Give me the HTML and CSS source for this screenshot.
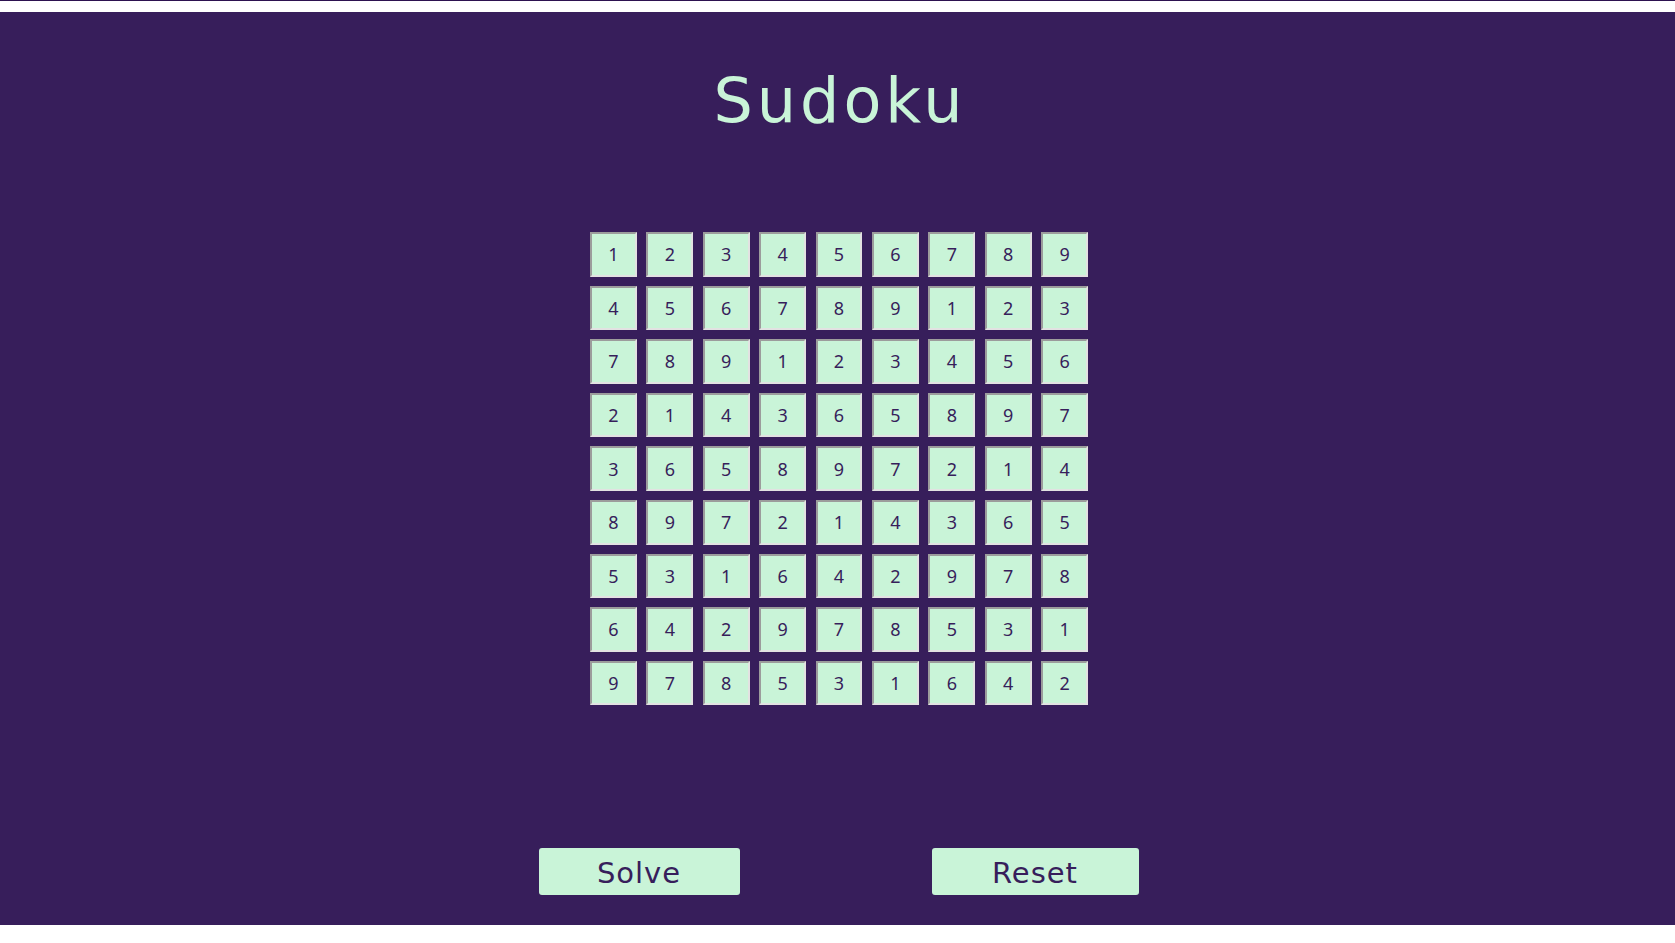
FILE: index.html
```html
<!DOCTYPE html>
<html lang="en">
<head>
<meta charset="utf-8">
<title>Sudoku</title>
<link rel="stylesheet" href="styles.css">
</head>
<body>
<div class="topline"></div>
<main class="app">
  <h1 class="title">Sudoku</h1>
  <div class="board-wrap">
    <div class="board">
      <div class="cell">1</div><div class="cell">2</div><div class="cell">3</div><div class="cell">4</div><div class="cell">5</div><div class="cell">6</div><div class="cell">7</div><div class="cell">8</div><div class="cell">9</div>
      <div class="cell">4</div><div class="cell">5</div><div class="cell">6</div><div class="cell">7</div><div class="cell">8</div><div class="cell">9</div><div class="cell">1</div><div class="cell">2</div><div class="cell">3</div>
      <div class="cell">7</div><div class="cell">8</div><div class="cell">9</div><div class="cell">1</div><div class="cell">2</div><div class="cell">3</div><div class="cell">4</div><div class="cell">5</div><div class="cell">6</div>
      <div class="cell">2</div><div class="cell">1</div><div class="cell">4</div><div class="cell">3</div><div class="cell">6</div><div class="cell">5</div><div class="cell">8</div><div class="cell">9</div><div class="cell">7</div>
      <div class="cell">3</div><div class="cell">6</div><div class="cell">5</div><div class="cell">8</div><div class="cell">9</div><div class="cell">7</div><div class="cell">2</div><div class="cell">1</div><div class="cell">4</div>
      <div class="cell">8</div><div class="cell">9</div><div class="cell">7</div><div class="cell">2</div><div class="cell">1</div><div class="cell">4</div><div class="cell">3</div><div class="cell">6</div><div class="cell">5</div>
      <div class="cell">5</div><div class="cell">3</div><div class="cell">1</div><div class="cell">6</div><div class="cell">4</div><div class="cell">2</div><div class="cell">9</div><div class="cell">7</div><div class="cell">8</div>
      <div class="cell">6</div><div class="cell">4</div><div class="cell">2</div><div class="cell">9</div><div class="cell">7</div><div class="cell">8</div><div class="cell">5</div><div class="cell">3</div><div class="cell">1</div>
      <div class="cell">9</div><div class="cell">7</div><div class="cell">8</div><div class="cell">5</div><div class="cell">3</div><div class="cell">1</div><div class="cell">6</div><div class="cell">4</div><div class="cell">2</div>
    </div>
  </div>
  <div class="actions">
    <button class="btn btn-solve">Solve</button>
    <button class="btn btn-reset">Reset</button>
  </div>
</main>
</body>
</html>
```

FILE: styles.css
```css
html, body {
  margin: 0;
  padding: 0;
  background: #ffffff;
}

.topline {
  height: 1px;
  background: #2d1250;
  margin-bottom: 11px;
}

.app {
  box-sizing: border-box;
  height: 913px;
  background: #371e5b;
  padding-top: 58px;
  display: flex;
  flex-direction: column;
  align-items: center;
}

.title {
  margin: 0;
  font-family: "DejaVu Sans", "Open Sans", sans-serif;
  font-weight: 400;
  font-size: 62px;
  line-height: 62px;
  letter-spacing: 4px;
  color: #c9f4d8;
  padding-left: 5px;
}

.board-wrap {
  margin-top: 100px;
  padding-left: 3px;
}

.board {
  display: grid;
  grid-template-columns: repeat(9, 46.8px);
  grid-auto-rows: 44.6px;
  column-gap: 9.6px;
  row-gap: 9px;
}

.cell {
  box-sizing: border-box;
  display: flex;
  align-items: center;
  justify-content: center;
  background: #c9f4d8;
  border-style: solid;
  border-width: 2px;
  border-top-color: #9c9c9c;
  border-left-color: #9c9c9c;
  border-bottom-color: #e2e2e2;
  border-right-color: #e2e2e2;
  font-family: "Noto Sans", "Open Sans", sans-serif;
  font-size: 18px;
  color: #371e5b;
}

.actions {
  margin-top: 143px;
  display: flex;
  justify-content: center;
  gap: 192px;
  padding-left: 2px;
}

.btn {
  box-sizing: border-box;
  height: 47px;
  padding: 3px 0 0 0;
  border: none;
  border-radius: 3px;
  background: #c9f4d8;
  color: #371e5b;
  font-family: "DejaVu Sans", "Open Sans", sans-serif;
  font-size: 29px;
  line-height: 44px;
  letter-spacing: 1px;
  cursor: pointer;
}

.btn-solve {
  width: 201px;
}

.btn-reset {
  width: 207px;
}
```
